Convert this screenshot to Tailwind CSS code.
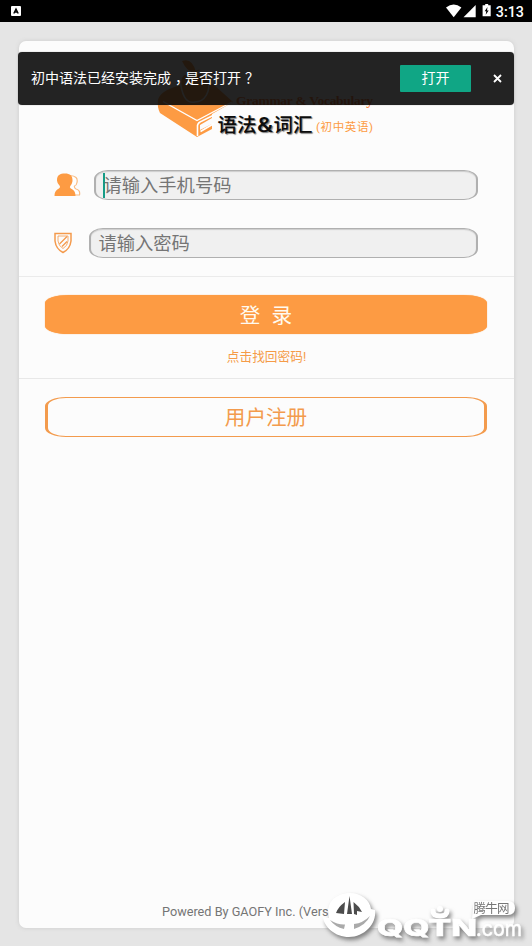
<!DOCTYPE html>
<html lang="zh-CN">
<head>
<meta charset="utf-8">
<title>语法&amp;词汇</title>
<script src="https://cdn.jsdelivr.net/npm/@tailwindcss/browser@4"></script>
</head>
<body class="relative h-[946px] w-[532px] overflow-hidden bg-[#e5e5e5] font-['Roboto','Noto_Sans_CJK_SC',sans-serif]">
<header class="flex h-[22px] items-center justify-between bg-black pl-[11px] pr-[8px] text-white">
  <svg width="10" height="10" viewBox="0 0 10 10"><rect width="10" height="10" rx="1" fill="#fff"/><path d="M2.8 7.5L5 3L7.2 7.5M3.5 6H6.5" fill="none" stroke="#000" stroke-width="1.4"/></svg>
  <div class="flex h-[22px] items-center">
    <svg width="46" height="22" viewBox="0 0 46 22" fill="#fff"><path d="M0 7.5Q7.7 1.700 15.400 7.500L7.700 17.200Z"/><path d="M17.500 17.200H29.700V5Z"/><path d="M37.300 5.200H39.200V4H42.200V5.200H44.700V16.300H36.600V5.200Z"/><path d="M41.500 7L38.700 11.300H40.300L39.700 14.800L42.700 10.400H41Z" fill="#000"/></svg>
    <span class="ml-[4px] pt-px text-[14.300px] font-medium leading-[22px]">3:13</span>
  </div>
</header>
<main class="ml-[19px] mt-[19px] flex h-[887px] w-[495px] flex-col rounded-[7px] bg-[#fcfcfc] shadow-[0_0_4px_#cccccc]">
  <div class="h-[129px] shrink-0">
    <svg class="ml-[131px]" width="240" height="104" viewBox="150 41 240 104">
      <path d="M158 100Q160 91 178 86L213 84L233 102L212 114V118L200 125V130L212 124V129L197 137L160 113Q157 107 158 100Z" fill="#fd9b43"/>
      <path d="M163 101.500L197 120.500L232 102" fill="none" stroke="#fff" stroke-width="1.400"/>
      <path d="M197.500 136V125.500Q198 122.500 202 121L214 115M200.500 131.500L214 123.500" fill="none" stroke="#fff" stroke-width="1.600"/>
      <path d="M191 77C185 70 179 76 181 86C183 97 187 104 195 102C205 102 211 91 208 80C206 72 196 72 191 77Z" fill="#fd9b43" stroke="#fff" stroke-width="1.500"/>
      <path d="M192 77Q194 68 201 70Q193 72 194 78ZM182 61Q192 57 196 72Q188 74 182 61Z" fill="#fd9b43"/>
      <text x="236" y="104.500" font-family="Liberation Serif" font-weight="700" font-size="13.500" textLength="137" fill="#fd7b33">Grammar &amp; Vocabulary</text>
      <g class="[text-shadow:1px_1px_1px_#777]" font-size="19.500" font-weight="500" fill="#0c0c0c"><text x="217.500" y="131.500">语法</text><text x="257" y="131.500" textLength="16" lengthAdjust="spacingAndGlyphs">&amp;</text><text x="273.500" y="131.500">词汇</text></g>
      <text x="316" y="131" font-size="11.500" textLength="57" fill="#fd9b43">(初中英语)</text>
    </svg>
  </div>
  <div class="ml-[35px] flex h-[30px] w-[424px] shrink-0 items-center">
    <svg width="27" height="24" viewBox="0 0 27 24"><path d="M16 2.500Q24.500 3 23 9.500Q22.500 12.500 20.500 13Q20 15 22 16Q26.500 17 25.500 22H17" fill="#fff" stroke="#f8bd86" stroke-width="1.200"/><path d="M3 7.500C3 2 6 .5 11 .5C16 .5 18.800 2.500 18.500 8C18 12 15.500 13 16 14.500C17 16.500 21.500 16 21.500 23H.5C.5 16 5.500 16.500 6 14C6 12 3.500 11.500 3 7.500Z" fill="#fd9b43"/></svg>
    <div class="ml-[13px] flex h-[30px] flex-1 items-center rounded-[14px/9px] border-x-2 border-y border-[#b0b0b0] bg-[#f0f0f0] pl-[7px] text-[18.300px] leading-[28px] text-[#757575] shadow-[inset_0_1px_1px_#ccc]"><i class="-mr-px block h-[25px] w-[1.500px] shrink-0 bg-[#159c87]"></i><span class="pt-[2px]">请输入手机号码</span></div>
  </div>
  <div class="ml-[35px] mt-[27.500px] flex h-[30px] w-[424px] shrink-0 items-center">
    <svg width="18" height="22" viewBox="0 0 18 22" fill="none" stroke="#f49a4c" stroke-width="1.500"><path d="M1 1.500H17V9Q16 17 9 20.500Q2 17 1 9Z"/><path d="M4 4H14V9Q13.500 14 9 16.500Q4.500 14 4 9Z" stroke-width=".8"/><path d="M5.500 12L13 4.500M8 14.500L13 9.500" stroke-width="1.300"/></svg>
    <div class="ml-[17.400px] flex h-[30px] flex-1 items-center rounded-[14px/9px] border-x-2 border-y border-[#b0b0b0] bg-[#f0f0f0] pl-[7px] text-[18.300px] leading-[28px] text-[#757575] shadow-[inset_0_1px_1px_#ccc]"><span class="pt-[2px]">请输入密码</span></div>
  </div>
  <div class="mt-[18.500px] h-px shrink-0 bg-[#ebebeb]"></div>
  <button class="ml-[26px] mt-[17.500px] h-[39px] w-[442px] shrink-0 whitespace-pre rounded-[24px/8px] bg-[#fd9b43] text-[20.600px] leading-[42px] text-[#fffaf0] shadow-[0_0_1px_#fd9b43]"><span class="[word-spacing:6px]">登 录</span></button>
  <a class="mt-[13px] block h-[20px] shrink-0 text-center text-[12.700px] leading-[20px] text-[#f59b47]">点击找回密码!</a>
  <div class="mt-[11.500px] h-px shrink-0 bg-[#e8e8e8]"></div>
  <button class="ml-[26px] mt-[18px] h-[40px] w-[442px] shrink-0 rounded-[21px/9px] border-x-[3px] border-y border-[#f39b4d] text-[20.600px] leading-[41px] text-[#f39b4d]">用户注册</button>
  <footer class="mb-[6px] ml-[143px] mt-auto whitespace-nowrap text-[12.700px] leading-[20px] text-[#757575]">Powered By GAOFY Inc. (Version)</footer>
</main>
<div class="absolute left-[18px] top-[52px] flex h-[53px] w-[496px] items-center rounded-[4px] bg-[#080808]/89 pl-[13px] text-[14px] text-white shadow-[0_0_1px_#777]">
  <span class="flex w-[369px] pb-px leading-[20px]"><span>初中语法已经安装完成</span><span class="w-[14px] pl-[4px] [font-feature-settings:'halt']">，</span><span>是否打开</span><span class="w-[14px] pl-[4px] [font-feature-settings:'halt']">？</span></span>
  <button class="h-[27px] w-[71px] rounded-[1px] bg-[#10a685] leading-[27px]">打开</button>
  <svg class="ml-[22px]" width="9" height="9" viewBox="0 0 9 9"><path d="M1 1L8 8M8 1L1 8" stroke="#fff" stroke-width="1.800"/></svg>
</div>
<svg class="absolute left-[310px] top-[880px] [filter:drop-shadow(2px_3px_2px_#666666cc)]" width="222" height="66" viewBox="310 880 222 66">
  <path d="M328 909C330 898 340 893 350 893C361 893 370 900 371 909L375 910C377 924 364 937 349 937C335 937 324 927 323 917L329 918Z" fill="#fff"/>
  <path d="M336 913Q338 907 345 902L344 914ZM347 914L349.500 896L352 914ZM354 914L353.500 902Q359 906 362 912L357 911V915Z" fill="#4c4c4c"/>
  <path d="M330 920Q338 925 345 924.500L344 929Q335 927 330 920ZM354 924Q363 923 370 916Q366 925 354 929Z" fill="#aaa"/>
  <path d="M433 911Q433 916 440 916Q447 916 447 911" fill="none" stroke="#fff" stroke-width="5" stroke-linecap="round"/><circle cx="440" cy="909" r="3" fill="#fff"/>
  <path d="M477 901H508Q515 901 515 908Q515 915 508 915H481L472 919L473 907Q473 901 477 901Z" fill="#fff"/>
  <text x="473.500" y="912.500" font-size="12.500" textLength="36" fill="#777">腾牛网</text>
  <text x="377" y="936" font-family="Inter" font-weight="800" font-size="23.500" textLength="100" lengthAdjust="spacingAndGlyphs" fill="#fff" stroke="#fff" stroke-width=".6">QQTN</text>
  <text x="476" y="936" font-family="Inter" font-size="21" textLength="46" lengthAdjust="spacingAndGlyphs" fill="#fff" stroke="#fff" stroke-width=".5">.com</text>
</svg>
</body>
</html>
